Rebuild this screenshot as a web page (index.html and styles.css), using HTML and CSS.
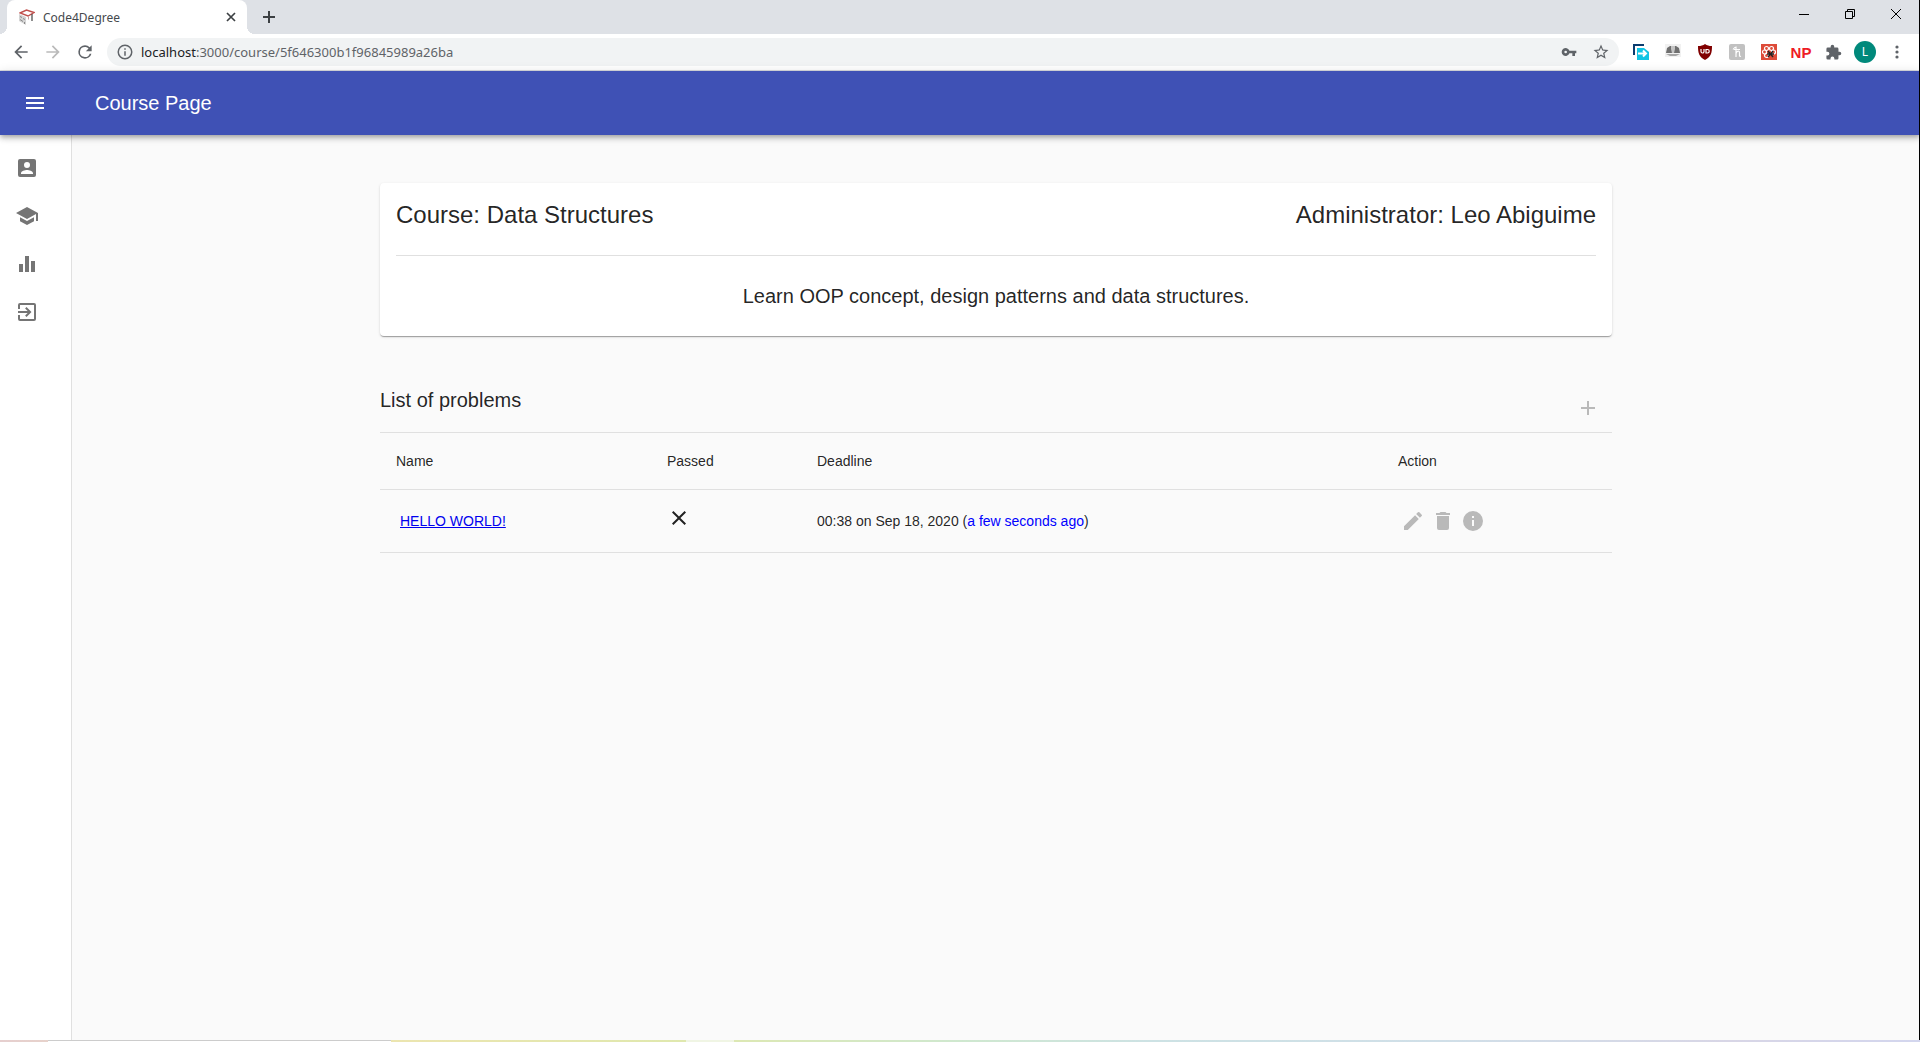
FILE: index.html
```html
<!DOCTYPE html>
<html lang="en">
<head>
<meta charset="utf-8">
<title>Code4Degree</title>
<link rel="stylesheet" href="styles.css">
</head>
<body>
<div class="window">
  <header class="browser">
    <div class="tabstrip">
      <div class="tab">
        <svg class="favicon" viewBox="0 0 16 16" aria-hidden="true">
          <path d="M0 5l7 3v8l-7-4z" fill="#d4d4d4"/>
          <path d="M1 7.500l2 1M4 9.500l2 1M1 10.500l3 2M5.500 13v2" stroke="#8a8a8a"/>
          <path d="M1 4l6.500-3L15 3.500 9 7z" fill="#fff" stroke="#c0504d" stroke-width="1.400"/>
          <path d="M9.500 7.500v3" stroke="#c9a0a0"/>
          <path d="M13 5v7" stroke="#444" stroke-width="1.200"/>
        </svg>
        <span class="tab-title">Code4Degree</span>
        <button class="chrome-btn tab-close" aria-label="Close tab"><svg width="10" height="10" viewBox="0 0 10 10"><path d="M1 1l8 8M9 1l-8 8" stroke="#3c4043" stroke-width="1.7"/></svg></button>
      </div>
      <button class="chrome-btn new-tab" aria-label="New tab"><svg width="12" height="12" viewBox="0 0 12 12"><path d="M6 0v12M0 6h12" stroke="#3c4043" stroke-width="2"/></svg></button>
      <div class="window-controls">
        <button class="chrome-btn" aria-label="Minimize"><svg width="10" height="10" viewBox="0 0 10 10"><path d="M0 5.500h10" stroke="#000"/></svg></button>
        <button class="chrome-btn" aria-label="Restore"><svg width="10" height="10" viewBox="0 0 10 10"><path d="M.5 2.500h7v7h-7zM2.500 2.500v-2h7v7h-2" fill="none" stroke="#000"/></svg></button>
        <button class="chrome-btn" aria-label="Close"><svg width="10" height="10" viewBox="0 0 10 10"><path d="M0 0l10 10M10 0L0 10" stroke="#000"/></svg></button>
      </div>
    </div>
    <div class="toolbar">
      <button class="chrome-btn nav-btn" aria-label="Back"><svg width="20" height="20" viewBox="0 0 24 24"><path fill="#5f6368" d="M20 11H7.830l5.590-5.590L12 4l-8 8 8 8 1.410-1.410L7.830 13H20z"/></svg></button>
      <button class="chrome-btn nav-btn" aria-label="Forward"><svg width="20" height="20" viewBox="0 0 24 24"><path fill="#bababa" d="M12 4l-1.410 1.410L16.170 11H4v2h12.170l-5.580 5.590L12 20l8-8z"/></svg></button>
      <button class="chrome-btn nav-btn" aria-label="Reload"><svg width="20" height="20" viewBox="0 0 24 24"><path fill="#5f6368" d="M17.650 6.350A7.960 7.960 0 0 0 12 4a8 8 0 1 0 7.730 10h-2.080A6 6 0 1 1 12 6c1.660 0 3.140.69 4.220 1.780L13 11h7V4z"/></svg></button>
      <div class="omnibox">
        <svg width="18" height="18" viewBox="0 0 24 24"><path fill="#5f6368" d="M11 17h2v-6h-2zm1-15a10 10 0 1 0 0 20 10 10 0 0 0 0-20zm0 18a8 8 0 1 1 0-16 8 8 0 0 1 0 16zM11 9h2V7h-2z"/></svg>
        <span class="url"><span class="host">localhost</span>:3000/course/5f646300b1f96845989a26ba</span>
        <button class="chrome-btn omni-btn" aria-label="Saved passwords"><svg width="16" height="16" viewBox="0 0 24 24"><path fill="#5f6368" d="M12.650 10A6 6 0 1 0 12.650 14H17v4h4v-4h2v-4zM7 14a2 2 0 1 1 0-4 2 2 0 0 1 0 4z"/></svg></button>
        <button class="chrome-btn omni-btn" aria-label="Bookmark this page"><svg width="18" height="18" viewBox="0 0 24 24"><path fill="#5f6368" d="M22 9.240l-7.190-.62L12 2 9.190 8.630 2 9.240l5.460 4.730L5.820 21 12 17.270 18.180 21l-1.630-7.030zM12 15.400l-3.760 2.270 1-4.280-3.320-2.880 4.380-.38L12 6.100l1.710 4.040 4.380.38-3.320 2.880 1 4.280z"/></svg></button>
      </div>
      <div class="extensions">
        <button class="chrome-btn ext" aria-label="Send page"><svg width="16" height="16" viewBox="0 0 16 16"><path d="M1 11V1h10" fill="none" stroke="#0b3c6f" stroke-width="2"/><path fill="#12c4e4" d="M4 4h7l5 4v8H4z"/><path d="M5 9.500h8M10 6.500l3 3-3 3" fill="none" stroke="#fff" stroke-width="2"/></svg></button>
        <button class="chrome-btn ext" aria-label="Agent"><svg width="16" height="16" viewBox="0 0 16 16"><path fill="#f1f1f1" d="M0 0h16v13H0z"/><path fill="#6f6f6f" d="M2 4l3-2h6l3 2 1 5H1z"/><path fill="#c4c4c4" d="M6 2h4v3L9 9H7L6 5z"/><path fill="#a5a5a5" d="M1 10h14l-4 2H5z"/></svg></button>
        <button class="chrome-btn ext" aria-label="Ad blocker"><svg width="16" height="16" viewBox="0 0 16 16"><path fill="#800000" d="M8 0c2 1.500 4 2 7 2 0 7-1 11-7 14C2 13 1 9 1 2c3 0 5-.5 7-2z"/><path d="M4 5v2.500a1.500 1.500 0 0 0 3 0V5M9 5.500v3.500h1.500a1.700 1.700 0 0 0 0-3.500z" fill="none" stroke="#fff" stroke-width="1.200"/></svg></button>
        <button class="chrome-btn ext" aria-label="Coupons"><svg width="16" height="16" viewBox="0 0 16 16"><rect width="16" height="16" rx="2" fill="#c1c1c1"/><path d="M4 5.500C5 4 6 3 7 3v10M7 9.500c1-3 3.500-3 3.500-1V12l1.500.5M5 5.500h6" fill="none" stroke="#fff" stroke-width="1.200"/></svg></button>
        <button class="chrome-btn ext" aria-label="React tools"><svg width="16" height="16" viewBox="0 0 16 16"><path fill="#dd4b39" d="M0 0h16v16H0z"/><g fill="none" stroke="#fff" stroke-width="1.200"><circle cx="5.500" cy="4.500" r="2"/><circle cx="10.500" cy="4.500" r="2"/><circle cx="3.500" cy="8" r="2"/><circle cx="12.500" cy="8" r="2"/><circle cx="5.500" cy="11.500" r="2"/></g><path d="M7 7l5 6M12 7l-5 6M6 10h7" stroke="#222" stroke-width="1.400"/></svg></button>
        <button class="chrome-btn ext ext-np" aria-label="NP">NP</button>
        <button class="chrome-btn ext" aria-label="Extensions"><svg width="17" height="17" viewBox="0 0 24 24"><path fill="#5f6368" d="M20.500 11H19V7a2 2 0 0 0-2-2h-4V3.500a2.500 2.500 0 0 0-5 0V5H4a2 2 0 0 0-2 2v3.800h1.500a2.700 2.700 0 0 1 0 5.400H2V20a2 2 0 0 0 2 2h3.800v-1.500a2.700 2.700 0 0 1 5.400 0V22H17a2 2 0 0 0 2-2v-4h1.500a2.500 2.500 0 0 0 0-5z"/></svg></button>
        <button class="chrome-btn ext" aria-label="Profile"><span class="avatar">L</span></button>
        <button class="chrome-btn ext" aria-label="Menu"><svg width="18" height="18" viewBox="0 0 18 18"><g fill="#5f6368"><circle cx="9" cy="4" r="1.600"/><circle cx="9" cy="9" r="1.600"/><circle cx="9" cy="14" r="1.600"/></g></svg></button>
      </div>
    </div>
  </header>

  <header class="appbar">
    <button class="icon-btn menu-btn" aria-label="Open drawer"><svg class="icon" viewBox="0 0 24 24"><path d="M3 18h18v-2H3zm0-5h18v-2H3zm0-7v2h18V6z"/></svg></button>
    <h1 class="appbar-title">Course Page</h1>
  </header>

  <div class="body">
    <nav class="drawer" aria-label="Main">
      <a class="drawer-link" href="#" aria-label="Account"><svg class="icon" viewBox="0 0 24 24"><path d="M3 5v14a2 2 0 0 0 2 2h14a2 2 0 0 0 2-2V5a2 2 0 0 0-2-2H5a2 2 0 0 0-2 2zm12 4a3 3 0 1 1-6 0 3 3 0 0 1 6 0zm-9 8c0-2 4-3.100 6-3.100s6 1.100 6 3.100v1H6z"/></svg></a>
      <a class="drawer-link" href="#" aria-label="Courses"><svg class="icon" viewBox="0 0 24 24"><path d="M5 13.180v4L12 21l7-3.820v-4L12 17zM12 3L1 9l11 6 9-4.910V17h2V9z"/></svg></a>
      <a class="drawer-link" href="#" aria-label="Ranking"><svg class="icon" viewBox="0 0 24 24"><path d="M4 12h4v8H4zm6-8h4v16h-4zm6 5h4v11h-4z"/></svg></a>
      <a class="drawer-link" href="#" aria-label="Log out"><svg class="icon" viewBox="0 0 24 24"><path d="M10.090 15.590L11.500 17l5-5-5-5-1.410 1.410L12.670 11H3v2h9.670zM19 3H5a2 2 0 0 0-2 2v4h2V5h14v14H5v-4H3v4a2 2 0 0 0 2 2h14a2 2 0 0 0 2-2V5a2 2 0 0 0-2-2z"/></svg></a>
    </nav>
    <main class="content">
      <section class="card">
        <div class="card-head">
          <h2 class="card-title">Course: Data Structures</h2>
          <p class="card-title">Administrator: Leo Abiguime</p>
        </div>
        <p class="card-text">Learn OOP concept, design patterns and data structures.</p>
      </section>
      <section class="problems">
        <div class="problems-head">
          <h2 class="problems-title">List of problems</h2>
          <button class="icon-btn add-btn" aria-label="Add problem"><svg class="icon" viewBox="0 0 24 24"><path d="M19 13h-6v6h-2v-6H5v-2h6V5h2v6h6z"/></svg></button>
        </div>
        <table class="table">
          <thead>
            <tr><th class="col-name">Name</th><th class="col-passed">Passed</th><th>Deadline</th><th class="col-action">Action</th></tr>
          </thead>
          <tbody>
            <tr>
              <td><a class="problem-link" href="#">HELLO WORLD!</a></td>
              <td class="passed"><svg class="icon" viewBox="0 0 24 24" role="img" aria-label="Not passed"><path d="M19 6.410L17.590 5 12 10.590 6.410 5 5 6.410 10.590 12 5 17.590 6.410 19 12 13.410 17.590 19 19 17.590 13.410 12z"/></svg></td>
              <td>00:38 on Sep 18, 2020 (<span class="ago">a few seconds ago</span>)</td>
              <td>
                <div class="actions">
                  <button class="icon-btn action" aria-label="Edit"><svg class="icon" viewBox="0 0 24 24"><path d="M3 17.250V21h3.750L17.810 9.940l-3.750-3.750zM20.710 7.040a1 1 0 0 0 0-1.410l-2.340-2.340a1 1 0 0 0-1.410 0l-1.830 1.830 3.750 3.750z"/></svg></button>
                  <button class="icon-btn action" aria-label="Delete"><svg class="icon" viewBox="0 0 24 24"><path d="M6 19a2 2 0 0 0 2 2h8a2 2 0 0 0 2-2V7H6zM19 4h-3.500l-1-1h-5l-1 1H5v2h14z"/></svg></button>
                  <button class="icon-btn action" aria-label="Details"><svg class="icon" viewBox="0 0 24 24"><path d="M12 2a10 10 0 1 0 0 20 10 10 0 0 0 0-20zm1 15h-2v-6h2zm0-8h-2V7h2z"/></svg></button>
                </div>
              </td>
            </tr>
          </tbody>
        </table>
      </section>
    </main>
  </div>
  <div class="desktop-strip"><span class="strip-panel"></span><span class="strip-light"></span></div>
</div>
</body>
</html>
```
FILE: styles.css
```css
* { box-sizing: border-box; }
body {
  margin: 0;
  background: #fafafa;
  color: rgba(0, 0, 0, 0.87);
  font-family: "Liberation Sans", Arial, sans-serif;
  font-size: 14px;
}
h1, h2, p { margin: 0; font-weight: 400; }
button { border: 0; padding: 0; background: none; font: inherit; color: inherit; }
svg { display: block; flex: none; }

.window { display: flex; flex-direction: column; min-height: 100vh; }
.window::after {
  content: "";
  position: absolute;
  top: 0;
  right: 0;
  bottom: 2px;
  width: 1px;
  background: #000;
  z-index: 3;
}

/* Browser chrome */
.browser { font-family: "Noto Sans", sans-serif; font-size: 12px; background: #fff; border-bottom: 1px solid #dadce0; }
.chrome-btn { display: flex; align-items: center; justify-content: center; }
.tabstrip { display: flex; height: 34px; padding-right: 1px; background: #dee1e6; }
.tab {
  display: flex;
  align-items: center;
  gap: 8px;
  width: 240px;
  margin-left: 7px;
  padding: 0 11px 0 12px;
  background: #fff;
  border-radius: 8px 8px 0 0;
  color: #45494d;
  position: relative;
}
.tab::before, .tab::after {
  content: "";
  position: absolute;
  bottom: 0;
  width: 8px;
  height: 8px;
}
.tab::before { left: -8px; background: radial-gradient(circle at 0 0, transparent 8px, #fff 8px); }
.tab::after { right: -8px; background: radial-gradient(circle at 100% 0, transparent 8px, #fff 8px); }
.favicon { width: 16px; height: 16px; }
.tab-title { flex: 1; }
.tab-close { width: 10px; height: 16px; }
.new-tab { width: 44px; }
.window-controls { display: flex; margin-left: auto; height: 28px; }
.window-controls .chrome-btn { width: 46px; }
.toolbar { display: flex; align-items: center; height: 36px; padding: 0 7px 0 5px; }
.nav-btn { width: 32px; height: 32px; }
.omnibox {
  display: flex;
  align-items: center;
  flex: 1;
  height: 28px;
  margin-left: 6px;
  padding: 0 2px 0 9px;
  background: #f1f3f4;
  border-radius: 14px;
  font-size: 13px;
}
.url { flex: 1; padding-left: 7px; color: #5f6368; }
.host { color: #202124; }
.omni-btn { width: 32px; }
.extensions { display: flex; padding-left: 6px; }
.ext { width: 32px; height: 32px; }
.ext-np { color: #ee1c25; font: bold 15px "Liberation Sans Narrow", "Liberation Sans", sans-serif; }
.avatar {
  width: 22px;
  height: 22px;
  border-radius: 50%;
  background: #00897b;
  color: #fff;
  font-size: 12px;
  line-height: 22px;
  text-align: center;
}

/* Application */
.icon { width: 24px; height: 24px; fill: currentColor; }
.icon-btn { display: flex; align-items: center; justify-content: center; border-radius: 50%; }
.appbar {
  display: flex;
  align-items: center;
  height: 64px;
  padding: 0 24px 0 11px;
  background: #3f51b5;
  color: #fff;
  box-shadow: 0 2px 4px -1px rgba(0, 0, 0, 0.2), 0 4px 5px 0 rgba(0, 0, 0, 0.14), 0 1px 10px 0 rgba(0, 0, 0, 0.12);
  position: relative;
  z-index: 2;
}
.menu-btn { width: 48px; height: 48px; margin-right: 36px; }
.appbar-title { font-size: 20px; line-height: 32px; }
.body { display: flex; flex: 1; }
.drawer { width: 72px; padding-top: 9px; background: #fff; border-right: 1px solid #e0e0e0; flex: none; }
.drawer-link { display: flex; align-items: center; height: 48px; padding-left: 15px; color: #757575; }
.content { flex: 1; max-width: 1280px; margin: 0 auto; padding: 48px 24px; }
.card {
  padding: 16px 16px 24px;
  background: #fff;
  border-radius: 4px;
  box-shadow: 0 2px 1px -1px rgba(0, 0, 0, 0.2), 0 1px 1px 0 rgba(0, 0, 0, 0.14), 0 1px 3px 0 rgba(0, 0, 0, 0.12);
}
.card-head { display: flex; justify-content: space-between; padding-bottom: 24px; border-bottom: 1px solid #e0e0e0; }
.card-title { font-size: 24px; line-height: 32px; }
.card-text { padding-top: 24px; font-size: 20px; line-height: 32px; text-align: center; }
.problems { padding-top: 48px; }
.problems-head { display: flex; justify-content: space-between; align-items: flex-start; }
.problems-title { font-size: 20px; line-height: 32px; }
.add-btn { width: 48px; height: 48px; color: #b9b9b9; }
.table { width: 100%; table-layout: fixed; border-collapse: separate; border-spacing: 0; border-top: 1px solid #e0e0e0; }
.table th, .table td { padding: 16px; border-bottom: 1px solid #e0e0e0; font-weight: 400; line-height: 24px; text-align: left; }
.col-name { width: 271px; }
.col-passed { width: 150px; }
.col-action { width: 230px; }
.problem-link { padding: 4px; color: #00e; }
.table .passed { vertical-align: top; }
.ago { color: #00f; }
.actions { display: flex; color: #b9b9b9; }
.action { width: 30px; height: 30px; }

/* Strip of desktop below the window */
.desktop-strip {
  display: flex;
  height: 2px;
  padding-left: 48px;
  background: linear-gradient(90deg, #e6cfcf 0, #ece5b0 20%, #dfe8ae 36%, #cfe8cf 50%, #cde2e4 60%, #d0dfe8 75%, #d8d6e6 90%, #d3d6ee);
}
.strip-panel { width: 343px; background: #fff; border-top: 1px solid #ccc; }
.strip-light { width: 48px; margin-left: 295px; background: #f0f5e4; }
```
